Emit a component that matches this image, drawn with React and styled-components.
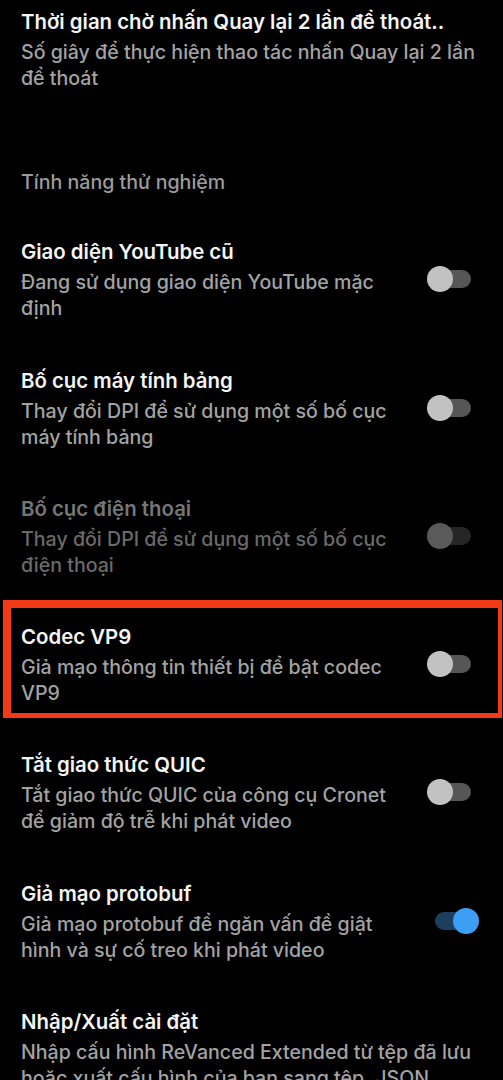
import React from 'react';
import styled, { createGlobalStyle } from "styled-components";

const GlobalStyle = createGlobalStyle`
    html, body {
        margin: 0;
        padding: 0;
        background: #000;
        overflow: hidden;
    }
    body {
        font-family: Inter, "Noto Sans", "DejaVu Sans", sans-serif;
        -webkit-font-smoothing: antialiased;
    }
`;

const preferences = [
    {
        title: "Giao diện YouTube cũ",
        summary: "Đang sử dụng giao diện YouTube mặc định",
        checked: false,
    },
    {
        title: "Bố cục máy tính bảng",
        summary: "Thay đổi DPI để sử dụng một số bố cục máy tính bảng",
        checked: false,
    },
    {
        title: "Bố cục điện thoại",
        summary: "Thay đổi DPI để sử dụng một số bố cục điện thoại",
        checked: false,
        disabled: true,
    },
    {
        title: "Codec VP9",
        summary: "Giả mạo thông tin thiết bị để bật codec VP9",
        checked: false,
        marked: true,
    },
    {
        title: "Tắt giao thức QUIC",
        summary: "Tắt giao thức QUIC của công cụ Cronet để giảm độ trễ khi phát video",
        checked: false,
    },
    {
        title: "Giả mạo protobuf",
        summary: "Giả mạo protobuf để ngăn vấn đề giật hình và sự cố treo khi phát video",
        checked: true,
    },
];

function Switch({ checked, disabled }) {
    return (
        <SwitchBox>
            <Track $checked={checked} $disabled={disabled} />
            <Knob $checked={checked} $disabled={disabled} />
        </SwitchBox>
    );
}

function App() {
    return (
        <>
            <GlobalStyle />
            <Screen>
                <Row>
                    <TextBlock>
                        <Title $nowrap>Thời gian chờ nhấn Quay lại 2 lần để thoát..</Title>
                        <Summary>Số giây để thực hiện thao tác nhấn Quay lại 2 lần để thoát</Summary>
                    </TextBlock>
                </Row>

                <Category>Tính năng thử nghiệm</Category>

                {
                    preferences.map((pref, index) => {
                        return (
                            <Row key={index}>
                                <TextBlock>
                                    <Title $disabled={pref.disabled}>{pref.title}</Title>
                                    <Summary $disabled={pref.disabled}>{pref.summary}</Summary>
                                </TextBlock>
                                <Switch checked={pref.checked} disabled={pref.disabled} />
                                {pref.marked && <Highlight />}
                            </Row>
                        )
                    })
                }

                <Row>
                    <TextBlock>
                        <Title>Nhập/Xuất cài đặt</Title>
                        <Summary>Nhập cấu hình ReVanced Extended từ tệp đã lưu hoặc xuất cấu hình của bạn sang tệp .JSON</Summary>
                    </TextBlock>
                </Row>
            </Screen>
        </>
    );
}

export default App;

const Screen = styled.div`
    width: 503px;
    height: 1095px;
    margin-top: -15px;
    background: #000;
    display: flex;
    flex-direction: column;
`;

const Row = styled.div`
    position: relative;
    display: flex;
    align-items: center;
    gap: 20px;
    padding: 22px 24px 22.3px 21px;
    flex-shrink: 0;
`;

const TextBlock = styled.div`
    flex: 1;
    min-width: 0;
    display: flex;
    flex-direction: column;
    gap: 2px;
`;

const Title = styled.div`
    font-size: 20.4px;
    line-height: 30px;
    font-weight: 600;
    color: ${props => props.$disabled ? "#767676" : "#f4f4f4"};
    white-space: ${props => props.$nowrap ? "nowrap" : "normal"};
`;

const Summary = styled.div`
    font-size: 19.6px;
    line-height: 26px;
    font-weight: 500;
    color: ${props => props.$disabled ? "#6a6a6a" : "#a3a3a3"};
`;

const Category = styled.div`
    padding: 56px 21px 20px;
    font-size: 19.6px;
    line-height: 26px;
    font-weight: 500;
    color: #9c9c9c;
`;

const SwitchBox = styled.div`
    position: relative;
    flex-shrink: 0;
    width: 52px;
    height: 26px;
    display: flex;
    align-items: center;
    justify-content: center;
`;

const Track = styled.div`
    width: 36px;
    height: 18px;
    border-radius: 9px;
    background: ${props => props.$disabled ? "#262626" : props.$checked ? "#1d3e5c" : "#565656"};
`;

const Knob = styled.div`
    position: absolute;
    top: 0;
    ${props => props.$checked ? "right: 0;" : "left: 0;"}
    width: 26px;
    height: 26px;
    border-radius: 50%;
    background: ${props => props.$disabled ? "#5a5a5a" : props.$checked ? "#3d9ef5" : "#c2c2c2"};
`;

const Highlight = styled.div`
    position: absolute;
    left: 3px;
    right: 1px;
    top: 0;
    height: 118px;
    border-style: solid;
    border-color: #f23a17;
    border-width: 8px 4px 5px 8px;
    box-sizing: border-box;
    pointer-events: none;
`;
